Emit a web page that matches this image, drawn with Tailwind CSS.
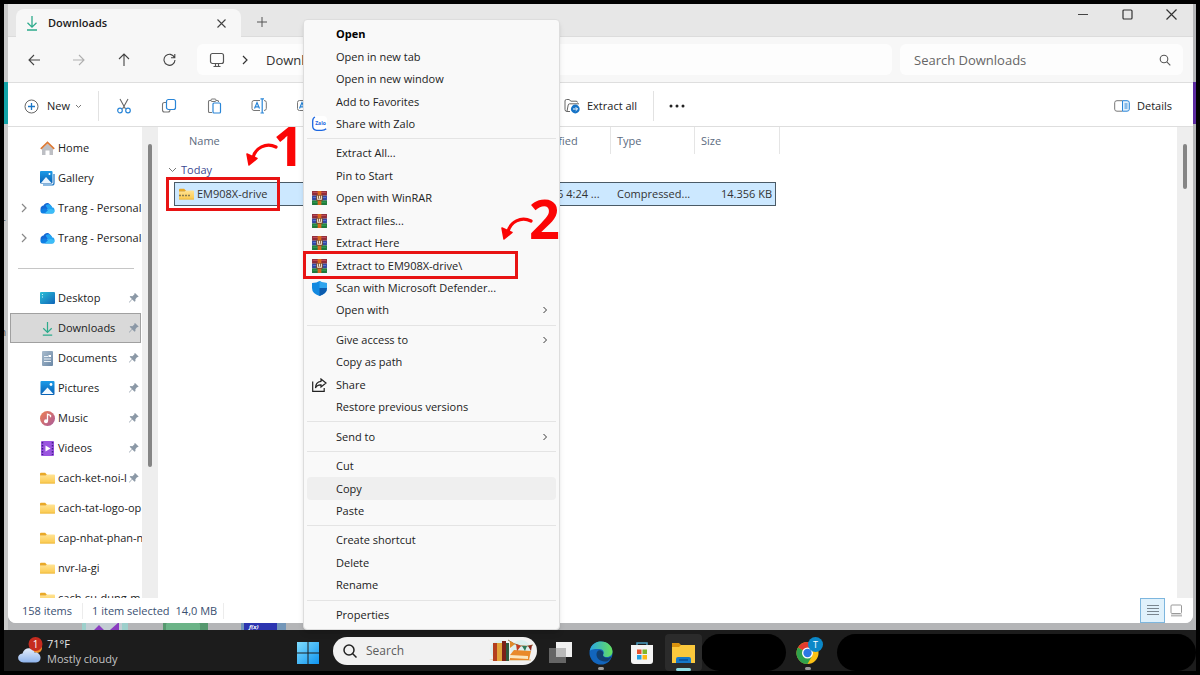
<!DOCTYPE html>
<html lang="en">
<head>
<meta charset="utf-8">
<meta name="viewport" content="width=device-width, initial-scale=1">
<title>Downloads - File Explorer</title>
<script src="https://cdn.jsdelivr.net/npm/@tailwindcss/browser@4"></script>
</head>
<body class="bg-black">
<svg class="absolute size-0" aria-hidden="true">
  <defs>
    <linearGradient id="gFolder" x1="0" y1="0" x2="0" y2="1"><stop offset="0" stop-color="#ffe394"/><stop offset="1" stop-color="#fbc94b"/></linearGradient>
    <linearGradient id="gDesk" x1="0" y1="0" x2="1" y2="1"><stop offset="0" stop-color="#2bc0d8"/><stop offset="1" stop-color="#0f64b8"/></linearGradient>
    <linearGradient id="gPic" x1="0" y1="0" x2="0" y2="1"><stop offset="0" stop-color="#1b9be8"/><stop offset="1" stop-color="#0860b4"/></linearGradient>
    <linearGradient id="gMus" x1="0" y1="0" x2="1" y2="1"><stop offset="0" stop-color="#f08050"/><stop offset="1" stop-color="#a85a9c"/></linearGradient>
    <linearGradient id="gDoc" x1="0" y1="0" x2="1" y2="1"><stop offset="0" stop-color="#a9bccd"/><stop offset="1" stop-color="#6a87a6"/></linearGradient>
    <linearGradient id="gWin" x1="0" y1="0" x2="1" y2="1"><stop offset="0" stop-color="#7fdcfd"/><stop offset="1" stop-color="#0f94f0"/></linearGradient>
    <linearGradient id="gCloud" x1="0" y1="0" x2="0" y2="1"><stop offset="0" stop-color="#e4edfb"/><stop offset="1" stop-color="#8fb4ec"/></linearGradient>
    <linearGradient id="gEdge" x1="0" y1="0" x2="1" y2="0"><stop offset="0" stop-color="#2aa6e4"/><stop offset="1" stop-color="#66e05c"/></linearGradient>
  </defs>
  <symbol id="folder" viewBox="0 0 16 14" preserveAspectRatio="none"><path d="M0 3V2q0-1 1-1h4.500L7 2.500v2H0z" fill="#e9a928"/><path d="M0 4.500h6L7.500 3H15q1 0 1 1v8.500q0 1-1 1H1q-1 0-1-1z" fill="url(#gFolder)"/><path d="M0 13h16" stroke="#e6b13a" stroke-width=".7"/></symbol>
  <symbol id="pin" viewBox="1 1 10.500 10.500"><path d="M7.300 1l3.800 3.800-.9.700-.6-.2-1.900 2.200.1 2-.9.800-2.500-2.500L1.500 11l-.6.100.2-.7 3-3L1.700 5l.9-.8 2 .1 2.200-1.900-.3-.6z" fill="#8b98a6"/></symbol>
  <symbol id="cloud" viewBox="0 1 16 10.500" preserveAspectRatio="none"><path d="M1 9C-.6 5.500 2 3.500 3.800 3.500 5 .8 9-.2 11.200 3L13 5z" fill="#1468d4"/><path d="M6 3.500C8 1.500 12 2 12.500 5c2.500 0 3.500 2 3 4L9 8z" fill="#22a4f2"/><path d="M3.200 11C1 11 .4 9.500.6 8.200 3 5.500 7 6 9 7.600L14.600 10q-.8 1-2 1z" fill="#0f7fe4"/><path d="M9 7.500c2-1.500 6-.5 6.500 1.500-.3 1.500-1.500 2-2.500 2H5z" fill="#3dbdf7"/></symbol>
  <symbol id="down" viewBox="0 0 12 16"><path d="M6 1v11M1.500 7.700L6 12.200l4.500-4.500M1 15h10" fill="none" stroke="#2dab8c" stroke-width="1.300"/></symbol>
  <symbol id="rar" viewBox="0 0 16 15"><path d="M0 0h16v5H0z" fill="#8e2c38"/><path d="M1 1.500h14" stroke="#c9505a"/><path d="M0 5h16v5H0z" fill="#3347a0"/><path d="M1 7h14" stroke="#5a78d8"/><path d="M0 10h16v5H0z" fill="#1e7a3c"/><path d="M1 12h14" stroke="#39a857"/><path d="M6 0h4v15H6z" fill="#d8691e"/><path d="M4.500 4.500h7v6h-7z" fill="#7a4c28"/><path d="M6 5v3.800h4V5M8 5v3" fill="none" stroke="#f3e6da" stroke-width="1.100"/></symbol>
  <symbol id="chev" viewBox="0 0 8 10"><path d="M2 1l4 4-4 4" fill="none" stroke="currentColor" stroke-width="1.200"/></symbol>
  <symbol id="arrow" viewBox="0 0 34 26"><path d="M30 6C20 1 9 7 7 17" fill="none" stroke="#fb0505" stroke-width="3.200" stroke-linecap="round"/><path d="M1 13l10 4.500L3 24z" fill="#fb0505" stroke="#fb0505" stroke-width="1.500" stroke-linejoin="round"/></symbol>
</svg>

<div class="relative flex h-screen flex-col bg-black p-1 font-['Open_Sans','Noto_Sans',sans-serif] text-[11px] leading-4 text-[#222]">
  <div class="relative flex min-h-0 flex-1 flex-col overflow-hidden bg-[#b4b5b7] pr-[2px] pb-[7px] pl-1">
    <!-- Slivers of the desktop windows behind -->
    <div class="absolute inset-y-0 left-0 w-1 bg-[#c9c9c9]" aria-hidden="true">
      <div class="absolute top-[78px] h-[42px] w-1 bg-[#12a3a8]"></div>
      <span class="absolute top-[212px] -left-1 text-[10px] text-[#555]">T</span>
      <span class="absolute top-[320px] -left-1 text-[10px] text-[#555]">n</span>
    </div>
    <div class="absolute top-[78px] right-0 h-[42px] w-[3px] bg-[#5b2aa0]" aria-hidden="true"></div>
    <svg class="absolute bottom-0 left-[78px]" width="208" height="9" aria-hidden="true"><path d="M0 0h46v9H0z" fill="#9ccfcb"/><path d="M4 0h36v9H4z" fill="#c3cdd3"/><path d="M12 9l5-5 5 5zM28 9l9-8v8z" fill="#8a3cc0"/><path d="M81 0h45v9H81z" fill="#56986e"/><path d="M84 9V4q0-3 4-3h26q4 0 4 3v5z" fill="#6bb387"/><path d="M159 0h45v9h-45z" fill="#7396b8"/><path d="M162 0h33v9h-33z" fill="#2c35b0"/><text x="167" y="8" font-size="6" font-style="italic" font-weight="700" fill="#fff">f(x)</text></svg>

    <!-- Explorer window -->
    <main class="relative mr-px flex min-h-0 flex-1 flex-col overflow-hidden rounded-b-lg bg-white">
      <header class="flex h-[33px] shrink-0 items-end border-b border-[#dcdcdc] bg-[#e7e7e7] pl-2">
        <div class="-mb-px flex h-7 w-[225px] items-center rounded-t-lg bg-[#f7f7f7] pr-3 pl-[10px]">
          <svg class="h-4 w-3" aria-hidden="true"><use href="#down"/></svg>
          <span class="ml-[10px] flex-1 font-semibold text-[#1b1b1b]">Downloads</span>
          <button aria-label="Close tab" class="grid size-4 place-items-center"><svg width="9" height="9" fill="none" stroke="#444" stroke-width="1.100"><path d="M.5.500l8 8M8.500.500l-8 8"/></svg></button>
        </div>
        <button aria-label="New tab" class="mb-[6px] ml-[13px] grid size-4 place-items-center"><svg width="10" height="10" fill="none" stroke="#555"><path d="M5 0v10M0 5h10"/></svg></button>
        <div class="mb-[14px] ml-auto flex gap-[28px] pr-[14px]">
          <button aria-label="Minimize" class="grid size-4 place-items-center"><svg width="10" height="10" stroke="#444"><path d="M0 5.500h10"/></svg></button>
          <button aria-label="Maximize" class="grid size-4 place-items-center"><svg width="11" height="11" fill="none" stroke="#333" stroke-width="1.200"><rect x="1" y="1" width="9" height="9" rx="1"/></svg></button>
          <button aria-label="Close" class="grid size-4 place-items-center"><svg width="11" height="11" fill="none" stroke="#333" stroke-width="1.200"><path d="M.5.500l10 10M10.500.500l-10 10"/></svg></button>
        </div>
      </header>

      <nav class="flex h-[46px] shrink-0 items-center border-b border-[#dedede] bg-[#f7f7f7] pr-[10px] pl-[18px] text-[13px]">
        <div class="flex gap-[29px]">
          <button aria-label="Back" class="grid size-4 place-items-center"><svg width="12" height="12" fill="none" stroke="#444" stroke-width="1.100"><path d="M12 6H1M6 1L1 6l5 5"/></svg></button>
          <button aria-label="Forward" class="grid size-4 place-items-center"><svg width="12" height="12" fill="none" stroke="#b0b0b0" stroke-width="1.100"><path d="M0 6h11M6 1l5 5-5 5"/></svg></button>
          <button aria-label="Up" class="grid size-4 place-items-center"><svg width="12" height="13" fill="none" stroke="#444" stroke-width="1.100"><path d="M6 13V1M1 6l5-5 5 5"/></svg></button>
          <button aria-label="Refresh" class="grid size-4 place-items-center"><svg width="13" height="13" fill="none" stroke="#444" stroke-width="1.100"><path d="M11.500 4.500A5.500 5.500 0 1 0 12 7M11.800 1v3.800H8"/></svg></button>
        </div>
        <div class="ml-5 flex h-[31px] flex-1 items-center rounded-md bg-[#fdfdfd] pl-3">
          <svg width="16" height="16" fill="none" stroke="#555" stroke-width="1.200" aria-hidden="true"><rect x="1.500" y="1.500" width="13" height="10" rx="2"/><path d="M4.500 14.500h7M6.500 12v2M9.500 12v2"/></svg>
          <svg class="ml-4 h-[10px] w-2 text-[#333]" aria-hidden="true"><use href="#chev"/></svg>
          <a href="#" class="ml-[17px] text-[#333]">Downloads</a>
        </div>
        <label class="ml-2 flex h-[31px] w-[283px] items-center rounded-md bg-[#fdfdfd] pr-3 pl-[14px]">
          <input type="text" aria-label="Search Downloads" placeholder="Search Downloads" class="min-w-0 flex-1 bg-transparent outline-none placeholder:text-[#666]">
          <svg width="12" height="12" fill="none" stroke="#555" stroke-width="1.100" aria-hidden="true"><circle cx="5" cy="5" r="3.800"/><path d="M7.800 7.800l3.500 3.500"/></svg>
        </label>
      </nav>

      <div class="flex h-[44px] shrink-0 items-center border-b border-[#dedede] bg-white pt-[3px] pr-[21px] pl-4" role="toolbar">
        <button class="flex items-center"><svg width="15" height="15" fill="none" aria-hidden="true"><circle cx="7.500" cy="7.500" r="6.500" stroke="#666"/><path d="M7.500 4v7M4 7.500h7" stroke="#1976c8" stroke-width="1.300"/></svg><span class="ml-[8px]">New</span><svg class="ml-[5px]" width="7" height="5" fill="none" stroke="#777" aria-hidden="true"><path d="M1 1l2.500 2.500L6 1"/></svg></button>
        <div class="ml-4 h-[30px] w-px bg-[#e2e2e2]"></div>
        <div class="ml-[17px] flex gap-[29px]">
          <button aria-label="Cut"><svg width="16" height="16" fill="none"><path d="M4 1l5.500 10M12 1L6.500 11" stroke="#666" stroke-width="1.100"/><circle cx="4" cy="12.500" r="2.300" stroke="#2a86d8" stroke-width="1.200"/><circle cx="12" cy="12.500" r="2.300" stroke="#2a86d8" stroke-width="1.200"/></svg></button>
          <button aria-label="Copy"><svg width="16" height="16" fill="none"><path d="M5 4.500H3.500q-2 0-2 2V12q0 2 2 2H7q2 0 2-2" stroke="#777" stroke-width="1.100"/><rect x="5.500" y="1.500" width="9" height="10" rx="2" stroke="#2a86d8" stroke-width="1.200"/></svg></button>
          <button aria-label="Paste"><svg width="16" height="16" fill="none"><path d="M6 14.500H3.500q-1 0-1-1V3.500q0-1 1-1H5M10 2.500h1.500q1 0 1 1V4" stroke="#777" stroke-width="1.100"/><rect x="5" y="1" width="5" height="2.500" rx="1" stroke="#777"/><rect x="7" y="5" width="7.500" height="10" rx="1" stroke="#2a86d8" stroke-width="1.200"/></svg></button>
          <button aria-label="Rename"><svg width="16" height="16" fill="none"><path d="M9 2.500H3q-2 0-2 2v6q0 2 2 2h6M13 2.500q2.300 0 2.300 2v6q0 2-2.300 2" stroke="#777"/><path d="M3.500 10.500L6 4.500l2.500 6M4.300 8.800h3.400M9.500.800h3.500M9.500 15h3.500M11.200.800V15" stroke="#2a86d8" stroke-width="1.200"/></svg></button>
          <button aria-label="Share"><svg width="16" height="16" fill="none"><path d="M12 2.500H3.500q-2 0-2 2v6q0 2 2 2H7" stroke="#777"/><path d="M3.500 10.500L6 4.500l2.500 6M4.300 8.800h3.400" stroke="#2a86d8" stroke-width="1.200"/></svg></button>
        </div>
        <button class="ml-[252px] flex items-center"><svg width="16" height="16" fill="none" aria-hidden="true"><path d="M6 13.500H3q-2 0-2-2V3q0-1.500 1.500-1.500H5L7 3.200h5q1.500 0 1.500 1.300M3 13.300L4.200 7q.2-1.200 1.500-1.200H15" stroke="#666"/><circle cx="11.300" cy="11" r="4.400" fill="#1673c6"/><path d="M9 11h4.500M11.700 9.200l1.800 1.800-1.800 1.800" stroke="#fff"/></svg><span class="ml-[7px]">Extract all</span></button>
        <div class="ml-4 h-[30px] w-px bg-[#e2e2e2]"></div>
        <button aria-label="See more" class="ml-[15px]"><svg width="16" height="4" fill="#222"><circle cx="2" cy="2" r="1.500"/><circle cx="8" cy="2" r="1.500"/><circle cx="14" cy="2" r="1.500"/></svg></button>
        <button class="ml-auto flex items-center"><svg width="16" height="12" fill="none" aria-hidden="true"><path d="M8.500.700H3q-2.300 0-2.300 2v6.500q0 2 2.300 2h5.500" stroke="#777"/><path d="M8.500.700H13q2.300 0 2.300 2v6.500q0 2-2.300 2H8.500z" fill="#e3f1fc" stroke="#2a86d8"/><path d="M10.500 4h3M10.500 6h3M10.500 8h3" stroke="#2a86d8"/></svg><span class="ml-[7px]">Details</span></button>
      </div>

      <div class="flex min-h-0 flex-1">
        <aside class="w-[134px] overflow-hidden pt-[6px] whitespace-nowrap">
          <ul>
            <li class="flex h-[30px] items-center pl-8"><svg width="15" height="15" aria-hidden="true"><path d="M2 7.500L7.500 2.500 13 7.500V14H9.500V9.500h-4V14H2z" fill="#bdbfc4"/><path d="M.8 7.800L7.500 1.500l6.700 6.300" fill="none" stroke="#dd7a35" stroke-width="1.700"/></svg><a href="#" class="ml-[3px]">Home</a></li>
            <li class="flex h-[30px] items-center pl-8"><svg width="15" height="15" aria-hidden="true"><path d="M3 14h9q2 0 2-2V3" fill="none" stroke="#1b76c4" stroke-width="1.200"/><rect width="12.500" height="12.500" rx="1" fill="url(#gPic)"/><path d="M1 12l5-6 5.500 6z" fill="#e9f5ff"/><circle cx="9.500" cy="3" r="1" fill="#fff"/></svg><a href="#" class="ml-[3px]">Gallery</a></li>
            <li class="flex h-[30px] items-center pl-3"><svg class="h-[10px] w-2 text-[#888]" aria-hidden="true"><use href="#chev"/></svg><svg class="ml-3 h-[11px] w-[15px]" aria-hidden="true"><use href="#cloud"/></svg><a href="#" class="ml-[3px]">Trang - Personal</a></li>
            <li class="flex h-[30px] items-center pl-3"><svg class="h-[10px] w-2 text-[#888]" aria-hidden="true"><use href="#chev"/></svg><svg class="ml-3 h-[11px] w-[15px]" aria-hidden="true"><use href="#cloud"/></svg><a href="#" class="ml-[3px]">Trang - Personal</a></li>
            <li class="flex h-[30px] items-center pr-2 pl-[10px]" role="separator"><span class="h-px flex-1 bg-[#c6c6c6]"></span></li>
            <li class="flex h-[30px] items-center pr-[3px] pl-8"><svg width="15" height="12" aria-hidden="true"><rect width="15" height="12" rx="1" fill="url(#gDesk)"/><path d="M2 2.500h1M2 5h1" stroke="#c4f3fa"/></svg><a href="#" class="ml-[3px] flex-1">Desktop</a><svg class="size-[10px]" aria-hidden="true"><use href="#pin"/></svg></li>
            <li class="mr-px ml-[2px] flex h-[30px] items-center border border-[#a0a0a0] bg-[#d9d9d9] pr-px pl-[29px]"><svg class="h-[15px] w-[15px]" aria-hidden="true"><use href="#down"/></svg><a href="#" class="ml-[3px] flex-1">Downloads</a><svg class="size-[10px]" aria-hidden="true"><use href="#pin"/></svg></li>
            <li class="flex h-[30px] items-center pr-[3px] pl-8"><svg width="15" height="15" aria-hidden="true"><rect x="2" width="11" height="15" rx="1" fill="url(#gDoc)"/><path d="M4 5.500h4M4 8h7M4 10.500h7" stroke="#e9f0f6"/><path d="M8.500 4h2.500v2H8.500z" fill="#fff"/></svg><a href="#" class="ml-[3px] flex-1">Documents</a><svg class="size-[10px]" aria-hidden="true"><use href="#pin"/></svg></li>
            <li class="flex h-[30px] items-center pr-[3px] pl-8"><svg width="15" height="14" aria-hidden="true"><rect x=".5" width="14" height="14" rx="1" fill="url(#gPic)"/><path d="M1.500 13l6-6.500 6 6.500z" fill="#f2f9ff"/><circle cx="11" cy="3.500" r="1.400" fill="#fff"/></svg><a href="#" class="ml-[3px] flex-1">Pictures</a><svg class="size-[10px]" aria-hidden="true"><use href="#pin"/></svg></li>
            <li class="flex h-[30px] items-center pr-[3px] pl-8"><svg width="15" height="15" aria-hidden="true"><circle cx="7.500" cy="7.500" r="7.500" fill="url(#gMus)"/><circle cx="6" cy="10.300" r="2" fill="#fff"/><path d="M7.500 10V3.200l3 1.300v1.700" fill="none" stroke="#fff" stroke-width="1.300"/></svg><a href="#" class="ml-[3px] flex-1">Music</a><svg class="size-[10px]" aria-hidden="true"><use href="#pin"/></svg></li>
            <li class="flex h-[30px] items-center pr-[3px] pl-8"><svg width="15" height="15" aria-hidden="true"><rect x="1" width="13" height="15" rx="1" fill="#9a55e0"/><path d="M2.500 1v13M12.500 1v13" stroke="#44208a" stroke-width="1.500" stroke-dasharray="1.500 1.500"/><path d="M5.500 4.500l5 3-5 3z" fill="#fff"/></svg><a href="#" class="ml-[3px] flex-1">Videos</a><svg class="size-[10px]" aria-hidden="true"><use href="#pin"/></svg></li>
            <li class="flex h-[30px] items-center pr-[3px] pl-8"><svg class="h-3 w-[15px] shrink-0" aria-hidden="true"><use href="#folder"/></svg><a href="#" class="ml-[3px] min-w-0 flex-1">cach-ket-noi-l</a><svg class="size-[10px] shrink-0" aria-hidden="true"><use href="#pin"/></svg></li>
            <li class="flex h-[30px] items-center pl-8"><svg class="h-3 w-[15px] shrink-0" aria-hidden="true"><use href="#folder"/></svg><a href="#" class="ml-[3px]">cach-tat-logo-op</a></li>
            <li class="flex h-[30px] items-center pl-8"><svg class="h-3 w-[15px] shrink-0" aria-hidden="true"><use href="#folder"/></svg><a href="#" class="ml-[3px]">cap-nhat-phan-n</a></li>
            <li class="flex h-[30px] items-center pl-8"><svg class="h-3 w-[15px] shrink-0" aria-hidden="true"><use href="#folder"/></svg><a href="#" class="ml-[3px]">nvr-la-gi</a></li>
            <li class="flex h-[30px] items-center pl-8"><svg class="h-3 w-[15px] shrink-0" aria-hidden="true"><use href="#folder"/></svg><a href="#" class="ml-[3px]">cach-su-dung-m</a></li>
          </ul>
        </aside>
        <div class="flex w-4 justify-center bg-[#eeeeee] pt-[17px]"><div class="h-[323px] w-1 rounded-full bg-[#858585]"></div></div>

        <section class="min-w-0 flex-1 pl-4">
          <table class="w-[606px] table-fixed border-separate border-spacing-0 text-left">
            <colgroup><col class="w-[329px]"><col class="w-[108px]"><col class="w-[84px]"><col class="w-[85px]"></colgroup>
            <thead class="text-[#5c6b80]">
              <tr class="h-[27px]"><th class="border-r border-[#e5e5e5] pl-[15px] font-normal">Name</th><th class="border-r border-[#e5e5e5] p-0 pl-[2px] font-normal">Date modified</th><th class="border-r border-[#e5e5e5] pl-[6px] font-normal">Type</th><th class="border-r border-[#e5e5e5] pl-[6px] font-normal">Size</th></tr>
            </thead>
            <tbody>
              <tr class="h-[28px]"><td colspan="4" class="pt-[3px] text-[#3c4a92]"><button class="-ml-[6px] flex items-center"><svg width="9" height="6" fill="none" stroke="#777" aria-hidden="true"><path d="M1 1l3.500 3.500L8 1"/></svg><span class="ml-1">Today</span></button></td></tr>
              <tr class="h-6 text-[#333]">
                <td class="border-y border-l border-[#4a5a66] bg-[#cce8ff] p-0"><span class="flex items-center pl-1"><svg width="15" height="12" viewBox="0 0 15 12" aria-hidden="true"><use href="#folder" width="15" height="12"/><path d="M0 7.500h12" stroke="#8a7d50" stroke-width="1.500" stroke-dasharray="2 1"/></svg><span class="ml-[3px]">EM908X-drive</span></span></td>
                <td class="border-y border-[#4a5a66] bg-[#cce8ff] p-0 pl-[2px] whitespace-nowrap">03/06/2026 4:24 ...</td>
                <td class="border-y border-[#4a5a66] bg-[#cce8ff] p-0 pl-[6px]">Compressed...</td>
                <td class="p-0"><span class="mr-[4px] flex h-6 items-center justify-end border-y border-r border-[#4a5a66] bg-[#cce8ff] pr-[3px]">14.356 KB</span></td>
              </tr>
            </tbody>
          </table>
        </section>
        <div class="flex w-4 justify-center bg-[#eeeeee] pt-[17px]"><div class="h-[45px] w-1 rounded-full bg-[#858585]"></div></div>
      </div>

      <footer class="flex h-[25px] shrink-0 items-center bg-white pl-[14px] text-[#3b4f70]">
        <span>158 items</span><span class="ml-[10px] h-4 w-px bg-[#ececec]"></span><span class="ml-[9px]">1 item selected</span><span class="ml-[6px]">14,0 MB</span><span class="ml-[6px] h-4 w-px bg-[#ececec]"></span>
        <button aria-label="Details view" class="ml-auto grid h-[25px] w-[25px] place-items-center border border-[#7db6de] bg-[#e0f1fb]"><svg width="12" height="11" stroke="#7a868f"><path d="M0 .5h12M0 3.500h12M0 6.500h12M0 9.500h12"/></svg></button>
        <button aria-label="Large icons view" class="mr-[10px] ml-[5px]"><svg width="13" height="13"><rect x="1" y="1" width="10.500" height="8.500" rx="1" fill="#fff" stroke="#999"/><path d="M1 11.500h11" stroke="#bbb" stroke-width="2"/></svg></button>
      </footer>
    </main>
  </div>

  <!-- Taskbar -->
  <footer class="relative flex h-[41px] shrink-0 items-center bg-[#1c1c1c] pt-1 pl-[13px] text-[#e8e8e8]">
    <button class="-mt-1 flex w-[280px] items-center text-left">
      <svg width="28" height="30" aria-hidden="true"><circle cx="20" cy="12" r="5" fill="#ef8d2b"/><path d="M6.500 26.500C-.5 26-.5 18 5.500 17.500 7 11 16 10.500 17.500 16.500 24.500 15.500 26 26 19 26.500z" fill="url(#gCloud)"/><circle cx="18.500" cy="8" r="7" fill="#c52b1f"/><text x="18.500" y="12" text-anchor="middle" font-size="10" fill="#fff">1</text></svg>
      <span class="ml-[2px] flex flex-col leading-[15px]"><span>71°F</span><span class="text-[#c4c4c4]">Mostly cloudy</span></span>
    </button>
    <button aria-label="Start"><svg width="22" height="22" aria-hidden="true"><path d="M0 0h10.500v10.500H0zM11.500 0H22v10.500H11.500zM0 11.500h10.500V22H0zM11.500 11.500H22V22H11.500z" fill="url(#gWin)"/></svg></button>
    <label class="-mt-1 ml-[14px] flex h-[28px] w-[204px] items-center rounded-full bg-[#f1f1f1] pr-[3px] pl-[10px]">
      <svg width="14" height="14" fill="none" stroke="#222" stroke-width="1.500" class="shrink-0" aria-hidden="true"><circle cx="6" cy="6" r="5"/><path d="M9.500 9.500l4 4"/></svg>
      <input type="text" placeholder="Search" aria-label="Search" class="ml-[9px] min-w-0 flex-1 bg-transparent text-[12px] outline-none placeholder:text-[#5c5c5c]">
      <svg width="46" height="26" class="shrink-0" aria-hidden="true"><circle cx="12" cy="12" r="10" fill="#dcefee"/><circle cx="33" cy="12" r="10" fill="#dcefee"/><path d="M1 21h42v2H6z" fill="#e6d5b8"/><path d="M5 5h4v18H5z" fill="#b3401f"/><path d="M9 5h5v18H9z" fill="#e0a43a"/><path d="M14 3h4v20h-4z" fill="#7c2118"/><path d="M18 5h3v18h-3z" fill="#2f5b3f"/><path d="M22 17l4-5 17 1-2 9H22z" fill="#e98a2a"/><path d="M22 17l18 1v3l-18-1z" fill="#fbe6bd"/><path d="M20 2q12 9 25 5" fill="none" stroke="#9a7748"/><path d="M22 3l5 3-5 4z" fill="#e08a2a"/><path d="M28 6l5 2-4 5z" fill="#c23b22"/><path d="M34 8h5l-2 5z" fill="#2e7a59"/><path d="M40 8l4-1-1 6z" fill="#8b2618"/></svg>
    </label>
    <button aria-label="Task view" class="ml-3"><svg width="23" height="22" aria-hidden="true"><path d="M7 0h16v15H7z" fill="#efefef"/><path d="M0 6h17v15H0z" fill="#727272" opacity=".85"/><path d="M7 6h10v9H7z" fill="#b9b9b9"/></svg></button>
    <button aria-label="Microsoft Edge" class="relative ml-[17px]"><svg width="24" height="24" viewBox="0 0 24 24" aria-hidden="true"><circle cx="12" cy="12" r="11.500" fill="#1265bd"/><path d="M.8 10C2 3 7 .5 12 .5c7 0 11.500 5 11.500 10 0 4-3 5.500-6 5.500-2.500 0-4-1-3-3 1-2-.5-5-4-5-4 0-8 0-9.700 2z" fill="url(#gEdge)"/><path d="M7.500 14c-.3-3.500 2-5.500 4.500-4.500 2.500 1 2.500 2.500 2 4-.5 2 1.500 3.500 4.500 3.300 1.500 0 3-.7 4-1.300-1 3-4 5.500-7 5-4.500-.5-7.700-3-8-6.500z" fill="#123f6f"/></svg><span class="absolute top-[26px] left-[9px] h-[3px] w-[6px] rounded-full bg-[#9a9a9a]"></span></button>
    <button aria-label="Microsoft Store" class="ml-[18px]"><svg width="22" height="22" aria-hidden="true"><path d="M6 4V1h10v3" fill="none" stroke="#4a9cc0" stroke-width="1.500"/><path d="M0 3h22v16q0 3-3 3H3q-3 0-3-3z" fill="#f4f4f4"/><path d="M6 7.500h4.500V12H6z" fill="#e8502c"/><path d="M11.500 7.500H16V12h-4.500z" fill="#7eb72a"/><path d="M6 13h4.500v4.500H6z" fill="#23a0e3"/><path d="M11.500 13H16v4.500h-4.500z" fill="#fdb913"/></svg></button>
    <button aria-label="File Explorer" class="relative ml-[12px] grid h-[37px] w-[37px] place-items-center rounded bg-[#2b2b2b]"><svg width="23" height="21" aria-hidden="true"><path d="M0 6V1h7l3 3v3z" fill="#d9920e"/><path d="M0 5h7l2-2h14v18H0z" fill="#fbc83c"/><path d="M4 21v-4q0-2 2-2h11q2 0 2 2v4z" fill="#1679c9"/><path d="M7 18h9" stroke="#0b4f94" stroke-width="1.500"/></svg><span class="absolute bottom-0 left-[11px] h-[3px] w-[15px] rounded-full bg-[#8fdbe3]"></span></button>
    <div class="-ml-px h-[37px] w-[85px] rounded-full bg-black"></div>
    <button aria-label="Google Chrome" class="relative -mt-1 ml-[10px]"><svg width="28" height="30" viewBox="0 0 28 30" aria-hidden="true"><circle cx="11.500" cy="17" r="11" fill="#fbc116"/><path d="M11.500 17L1.970 11.500A11 11 0 0 1 21 11.500z" fill="#e33b2e"/><path d="M11.500 17L1.970 11.500A11 11 0 0 0 11.500 28l4-7z" fill="#2fa24c"/><circle cx="11.500" cy="17" r="5.500" fill="#fff"/><circle cx="11.500" cy="17" r="4.200" fill="#2b78e4"/><circle cx="19.500" cy="8.500" r="7.500" fill="#0b88c8"/><text x="19.500" y="12" text-anchor="middle" font-size="9" fill="#fff">T</text></svg><span class="absolute top-[31px] left-[9px] h-[3px] w-[6px] rounded-full bg-[#9a9a9a]"></span></button>
    <div class="ml-[13px] h-[37px] flex-1 rounded-full bg-black"></div>
  </footer>

  <!-- Context menu -->
  <div role="menu" class="absolute top-[19px] left-[303px] flex h-[611px] w-[257px] flex-col rounded border border-[#dddddd] bg-[#f9f9f9] p-[3px] shadow-md *:[button]:flex *:[button]:flex-1 *:[button]:items-center *:[button]:rounded-sm *:[button]:pr-2 *:[button]:pl-[29px] *:[button]:text-left *:[hr]:my-[3px] *:[hr]:border-[#e4e4e4]">
    <button role="menuitem" class="font-bold text-black">Open</button>
    <button role="menuitem">Open in new tab</button>
    <button role="menuitem">Open in new window</button>
    <button role="menuitem">Add to Favorites</button>
    <button role="menuitem"><svg class="mr-[9px] -ml-6" width="15" height="15" aria-hidden="true"><rect width="15" height="15" rx="4" fill="#fff"/><path d="M3 1Q.7 2 .7 5v5q0 4 4 4.300h5q3 0 4.500-1.500" fill="none" stroke="#1b66e0" stroke-width="1.300"/><text x="8.500" y="9" text-anchor="middle" font-size="5" font-weight="700" fill="#1b66e0">Zalo</text></svg>Share with Zalo</button>
    <hr>
    <button role="menuitem">Extract All...</button>
    <button role="menuitem">Pin to Start</button>
    <button role="menuitem"><svg class="mr-[9px] -ml-6 h-[14px] w-[15px]" aria-hidden="true"><use href="#rar"/></svg>Open with WinRAR</button>
    <button role="menuitem"><svg class="mr-[9px] -ml-6 h-[14px] w-[15px]" aria-hidden="true"><use href="#rar"/></svg>Extract files...</button>
    <button role="menuitem"><svg class="mr-[9px] -ml-6 h-[14px] w-[15px]" aria-hidden="true"><use href="#rar"/></svg>Extract Here</button>
    <button role="menuitem"><svg class="mr-[9px] -ml-6 h-[14px] w-[15px]" aria-hidden="true"><use href="#rar"/></svg>Extract to EM908X-drive\</button>
    <button role="menuitem"><svg class="mr-[9px] -ml-6" width="15" height="15" aria-hidden="true"><path d="M7.500 0Q10 2 15 2v5q0 5.500-7.500 8Q0 12.500 0 7V2q5 0 7.500-2z" fill="#1389e0"/><path d="M7.500 0Q10 2 15 2v5H7.500z" fill="#2fa5ee"/><path d="M7.500 7H15q0 5.500-7.500 8z" fill="#0c5cae"/></svg>Scan with Microsoft Defender...</button>
    <button role="menuitem"><span class="flex-1">Open with</span><svg class="h-2 w-[6px]" aria-hidden="true"><use href="#chev"/></svg></button>
    <hr>
    <button role="menuitem"><span class="flex-1">Give access to</span><svg class="h-2 w-[6px]" aria-hidden="true"><use href="#chev"/></svg></button>
    <button role="menuitem">Copy as path</button>
    <button role="menuitem"><svg class="mr-[9px] -ml-6" width="15" height="14" fill="none" stroke="#222" stroke-width="1.200" aria-hidden="true"><path d="M.7 3.500v9.800h11.500V10"/><path d="M9 1l5 4-5 4V6.800Q5 6.500 3.500 10 3.500 4 9 3.300z"/></svg>Share</button>
    <button role="menuitem">Restore previous versions</button>
    <hr>
    <button role="menuitem"><span class="flex-1">Send to</span><svg class="h-2 w-[6px]" aria-hidden="true"><use href="#chev"/></svg></button>
    <hr>
    <button role="menuitem">Cut</button>
    <button role="menuitem" class="bg-[#efefef]">Copy</button>
    <button role="menuitem">Paste</button>
    <hr>
    <button role="menuitem">Create shortcut</button>
    <button role="menuitem">Delete</button>
    <button role="menuitem">Rename</button>
    <hr>
    <button role="menuitem">Properties</button>
  </div>

  <!-- Step markers -->
  <div class="absolute top-[177px] left-[166px] h-[34px] w-[114px] border-[3px] border-[#e81313]"></div>
  <div class="absolute top-[251px] left-[303px] h-[28px] w-[215px] border-[3px] border-[#e81313]"></div>
  <svg class="absolute top-[141px] left-[246px] h-[26px] w-[34px]" aria-hidden="true"><use href="#arrow"/></svg>
  <svg class="absolute top-[215px] left-[501px] h-[26px] w-[34px]" aria-hidden="true"><use href="#arrow"/></svg>
  <span class="absolute top-[118px] left-[273px] text-[54px] leading-[54px] font-bold text-[#fb0505]">1</span>
  <span class="absolute top-[191px] left-[529px] text-[54px] leading-[54px] font-bold text-[#fb0505]">2</span>
</div>
</body>
</html>
